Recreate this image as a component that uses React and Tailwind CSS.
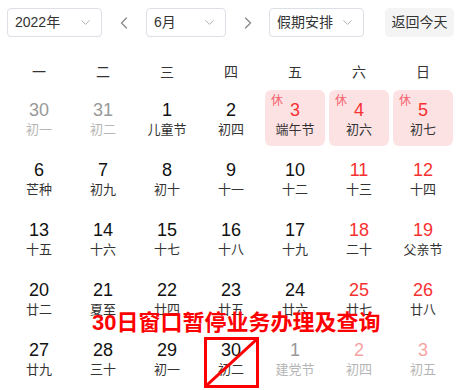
import { ChevronDown, ChevronLeft, ChevronRight } from "lucide-react";

const weeks = ["一", "二", "三", "四", "五", "六", "日"];

// t: n normal, g gray (other month), r red weekend, h holiday, p pale red (other month weekend)
const days = [
  [30, "初一", "g"], [31, "初二", "g"], [1, "儿童节", "n"], [2, "初四", "n"], [3, "端午节", "h"], [4, "初六", "h"], [5, "初七", "h"],
  [6, "芒种", "n"], [7, "初九", "n"], [8, "初十", "n"], [9, "十一", "n"], [10, "十二", "n"], [11, "十三", "r"], [12, "十四", "r"],
  [13, "十五", "n"], [14, "十六", "n"], [15, "十七", "n"], [16, "十八", "n"], [17, "十九", "n"], [18, "二十", "r"], [19, "父亲节", "r"],
  [20, "廿二", "n"], [21, "夏至", "n"], [22, "廿四", "n"], [23, "廿五", "n"], [24, "廿六", "n"], [25, "廿七", "r"], [26, "廿八", "r"],
  [27, "廿九", "n"], [28, "三十", "n"], [29, "初一", "n"], [30, "初二", "n"], [1, "建党节", "g"], [2, "初四", "p"], [3, "初五", "p"],
];

const numColor = {
  n: "text-[#111]",
  g: "text-[#999]",
  r: "text-[#f73131]",
  h: "text-[#f73131]",
  p: "text-[#f5a3a3]",
};

const lunarColor = {
  n: "text-[#333]",
  g: "text-[#b5b5b5]",
  r: "text-[#333]",
  h: "text-[#333]",
  p: "text-[#b5b5b5]",
};

function Select({ label, width }) {
  return (
    <div
      className={`flex h-[29px] items-center justify-between rounded-[4px] border border-[#dcdfe6] bg-white pl-[7px] pr-[8px] text-[14px] text-[#333] ${width}`}
    >
      <span>{label}</span>
      <ChevronDown size={15} strokeWidth={1.5} className="text-[#a8abb2]" />
    </div>
  );
}

export default function App() {
  return (
    <div
      className="relative h-[390px] w-[462px] overflow-hidden bg-white"
      style={{ fontFamily: '"Liberation Sans", "Noto Sans CJK SC", sans-serif' }}
    >
      <div className="flex items-center pl-[7px] pt-[8px]">
        <Select label="2022年" width="w-[95px]" />
        <div className="flex w-[44px] justify-center">
          <ChevronLeft size={20} strokeWidth={1.5} className="text-[#888]" />
        </div>
        <Select label="6月" width="w-[80px]" />
        <div className="flex w-[43px] justify-center">
          <ChevronRight size={20} strokeWidth={1.5} className="text-[#888]" />
        </div>
        <Select label="假期安排" width="w-[95px]" />
        <div className="ml-[21px] flex h-[29px] w-[69px] items-center justify-center rounded-[5px] bg-[#f4f4f5] text-[14px] text-[#333]">
          返回今天
        </div>
      </div>

      <div className="mt-[22px] grid grid-cols-7 gap-x-[4px] px-[9px]">
        {weeks.map((w) => (
          <div key={w} className="h-[26px] text-center text-[14px] leading-[26px] text-[#333]">
            {w}
          </div>
        ))}
      </div>

      <div className="mt-[5px] grid grid-cols-7 gap-[4px] px-[9px]">
        {days.map(([d, l, t], i) => (
          <div
            key={i}
            className={`relative flex h-[56px] flex-col items-center rounded-[6px] pt-[10px] ${t === "h" ? "bg-[#fde2e4]" : ""}`}
          >
            {t === "h" && (
              <span className="absolute left-[6px] top-[4px] text-[12px] leading-[14px] text-[#f5626b]">休</span>
            )}
            <span className={`text-[18px] leading-[20px] ${numColor[t]}`}>{d}</span>
            <span className={`mt-[2px] text-[13px] leading-[16px] ${lunarColor[t]}`}>{l}</span>
          </div>
        ))}
      </div>

      <div className="absolute left-[92px] top-[311px] text-[22px] font-bold leading-[24px] text-[#ff0000]">
        30日窗口暂停业务办理及查询
      </div>
      <div className="absolute left-[204px] top-[337px] h-[51px] w-[55px] border-[3px] border-[#ff0000]">
        <svg className="absolute inset-0" width="49" height="45" viewBox="0 0 49 45">
          <line x1="0" y1="45" x2="49" y2="0" stroke="#ff0000" strokeWidth="3" />
        </svg>
      </div>
    </div>
  );
}
